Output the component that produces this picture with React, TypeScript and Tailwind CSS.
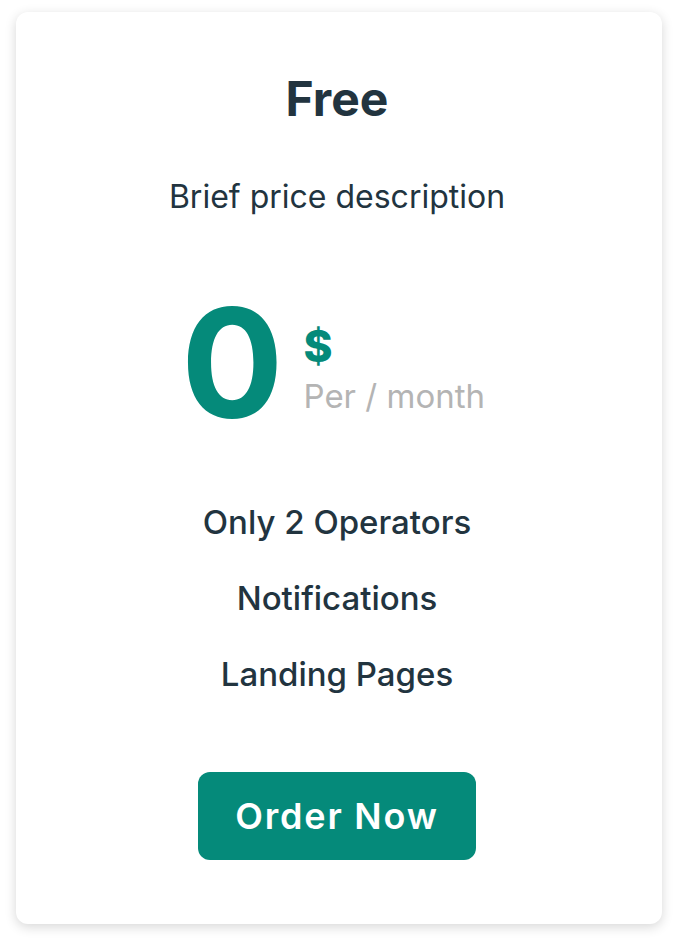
export default function App() {
  const features = ["Only 2 Operators", "Notifications", "Landing Pages"];

  return (
    <div className="min-h-screen bg-white px-4 pt-3 font-['Inter',sans-serif]">
      <div className="flex h-[912px] flex-col items-center rounded-xl bg-white pr-1 pt-[63px] shadow-[0_3px_12px_rgba(0,0,0,0.16)]">
        <h2 className="text-[48px] font-bold leading-none text-[#22343f]">Free</h2>
        <p className="mt-[58px] text-[32px] leading-none text-[#22343f]">
          Brief price description
        </p>

        <div className="mt-[90px] flex items-start pr-2">
          <span className="text-[152px] font-bold leading-[120px] text-[#058a7a]">0</span>
          <div className="ml-5 flex flex-col pt-[21px]">
            <span className="text-[44px] font-extrabold leading-none text-[#058a7a]">$</span>
            <span className="mt-[12px] text-[33px] leading-none text-[#b4b4b4]">Per / month</span>
          </div>
        </div>

        <ul className="mt-[84px] flex flex-col items-center gap-[46px]">
          {features.map((f) => (
            <li key={f} className="text-[33px] font-medium leading-[30px] text-[#22343f]">
              {f}
            </li>
          ))}
        </ul>

        <button className="mt-[83px] h-[88px] w-[278px] rounded-xl bg-[#058a7a] text-[36px] font-semibold tracking-wider text-white">
          Order Now
        </button>
      </div>
    </div>
  );
}
